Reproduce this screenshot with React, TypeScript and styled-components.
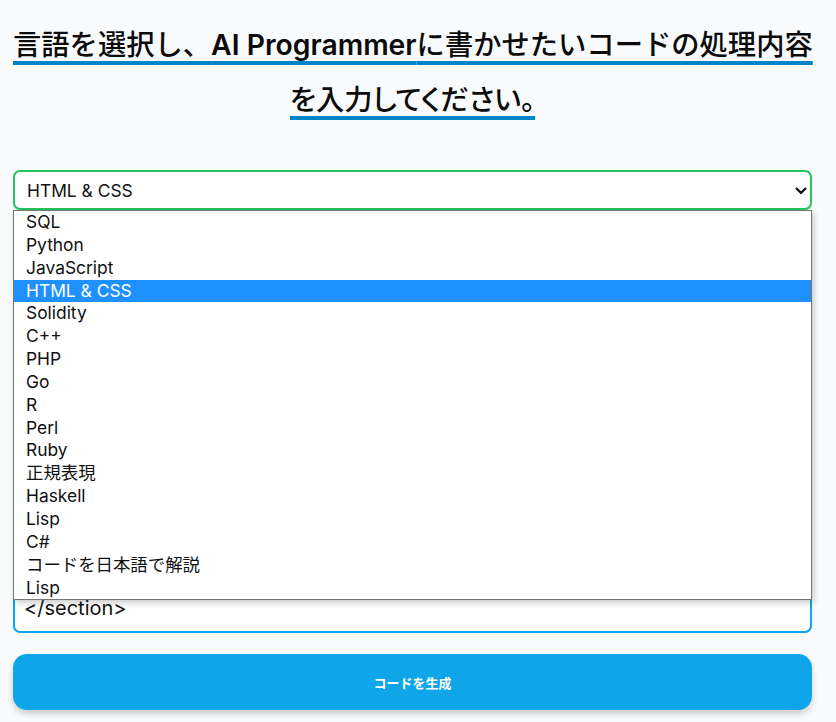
import React, { useEffect, useRef } from "react";
import styled, { createGlobalStyle } from "styled-components";

const GlobalStyle = createGlobalStyle`
  html, body { margin: 0; padding: 0; background: #f8fafc; }
  body { font-family: Inter, "Noto Sans CJK JP", sans-serif; color: #111; }
  * { box-sizing: border-box; }
`;

const Page = styled.main`
  padding: 18px 24px 12px 13px;
  display: flex;
  flex-direction: column;
`;

const Title = styled.h1`
  margin: 0 0 42px;
  text-align: center;
  font-family: Inter, "Noto Sans CJK JP", sans-serif;
  font-size: 28.3px;
  font-weight: 500;
  line-height: 55px;
  color: #0b0b0b;
`;

const TitleLine = styled.span<{ $prop?: boolean }>`
  display: block;
  white-space: nowrap;
  font-feature-settings: ${(p) => (p.$prop ? '"palt" 1' : "normal")};
`;

const Underlined = styled.span`
  text-decoration: underline;
  text-decoration-color: #0284c7;
  text-decoration-thickness: 4px;
  text-underline-offset: 6px;
`;

const Latin = styled.span`
  font-weight: 600;
`;

const SelectWrap = styled.div`
  position: relative;
  z-index: 2;
`;

const SelectBox = styled.div`
  height: 40px;
  border: 2px solid #22c55e;
  border-radius: 7px;
  background: #fff;
  display: flex;
  align-items: center;
  justify-content: space-between;
  padding: 1px 3px 0 12px;
  font-size: 17.4px;
  color: #111;
  box-shadow: 0 1px 2px rgba(0, 0, 0, 0.06);
`;

const ListBox = styled.ul`
  position: absolute;
  top: 40px;
  left: 0;
  right: 0;
  margin: 0;
  padding: 0;
  list-style: none;
  background: #fff;
  border: 1px solid #767676;
  box-shadow: 2px 3px 6px rgba(0, 0, 0, 0.2);
`;

const Option = styled.li<{ $active?: boolean }>`
  height: 22.85px;
  line-height: 22.85px;
  padding-left: 12px;
  font-size: 17.4px;
  font-family: Inter, "Noto Sans CJK JP", sans-serif;
  color: ${(p) => (p.$active ? "#fff" : "#111")};
  background: ${(p) => (p.$active ? "#1e90ff" : "transparent")};
`;

const CodeArea = styled.textarea`
  margin-top: 16px;
  height: 407px;
  width: 100%;
  resize: none;
  overflow: hidden;
  border: 2px solid #0ea5e9;
  border-radius: 7px;
  background: #fff;
  padding: 10px 9px 9px;
  font-family: Inter, "Noto Sans CJK JP", sans-serif;
  font-size: 20px;
  line-height: 28px;
  color: #111;
  outline: none;
`;

const GenerateButton = styled.button`
  margin-top: 21px;
  height: 56px;
  width: 100%;
  border: none;
  border-radius: 14px;
  background: #0ea5e9;
  color: #fff;
  font-family: "Noto Sans CJK JP", sans-serif;
  font-size: 13px;
  font-weight: 700;
  box-shadow: 0 4px 6px rgba(0, 0, 0, 0.18);
  cursor: pointer;
`;

const Chevron = () => (
  <svg width="12" height="8" viewBox="0 0 12 8" aria-hidden="true">
    <path d="M1.8 1.8 L6 5.8 L10.2 1.8" fill="none" stroke="#111" strokeWidth="2.3" strokeLinecap="square" />
  </svg>
);

const options = [
  "SQL",
  "Python",
  "JavaScript",
  "HTML & CSS",
  "Solidity",
  "C++",
  "PHP",
  "Go",
  "R",
  "Perl",
  "Ruby",
  "正規表現",
  "Haskell",
  "Lisp",
  "C#",
  "コードを日本語で解説",
  "Lisp",
];

const code = `<section class="hero">
  <div class="container">
    <header class="hero__header">
      <h1 class="hero__title">Welcome</h1>
      <p class="hero__lead">AI Programmer</p>
    </header>
    <ul class="hero__list">
      <li>Item 1</li>
      <li>Item 2</li>
      <li>Item 3</li>
      <li>Item 4</li>
    </ul>
    <div class="hero__actions">
      <a class="btn" href="#">Start</a>
      <a class="btn btn--ghost" href="#">More</a>
    </div>
  </div>
</section>`;

export default function App() {
  const ref = useRef<HTMLTextAreaElement>(null);
  useEffect(() => {
    const el = ref.current;
    if (el) {
      el.scrollTop = el.scrollHeight;
      requestAnimationFrame(() => {
        el.scrollTop = el.scrollHeight;
      });
    }
  }, []);
  const selected = "HTML & CSS";
  return (
    <>
      <GlobalStyle />
      <Page>
        <Title>
          <TitleLine>
            <Underlined>
              言語を選択し、<Latin>AI Programmer</Latin>に書かせたいコードの処理内容
            </Underlined>
          </TitleLine>
          <TitleLine $prop>
            <Underlined>を入力してください。</Underlined>
          </TitleLine>
        </Title>
        <SelectWrap>
          <SelectBox>
            <span>{selected}</span>
            <Chevron />
          </SelectBox>
          <ListBox role="listbox">
            {options.map((o, i) => (
              <Option key={i} $active={o === selected}>
                {o}
              </Option>
            ))}
          </ListBox>
        </SelectWrap>
        <CodeArea ref={ref} readOnly value={code} />
        <GenerateButton>コードを生成</GenerateButton>
      </Page>
    </>
  );
}
